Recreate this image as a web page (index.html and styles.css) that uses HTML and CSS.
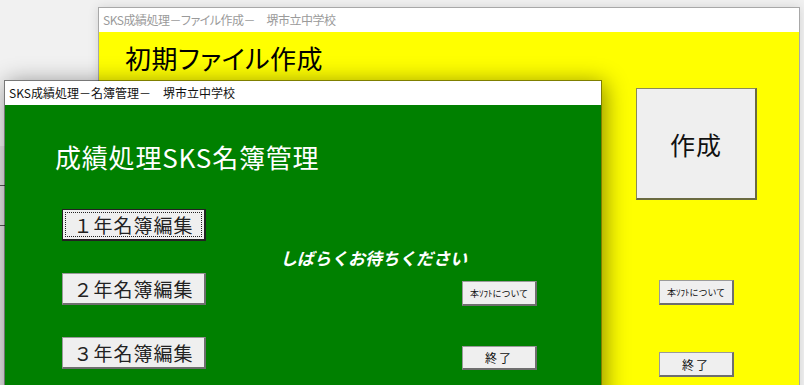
FILE: index.html
```html
<!DOCTYPE html>
<html lang="ja">
<head>
<meta charset="utf-8">
<link rel="stylesheet" href="styles.css">
</head>
<body>
<div class="desktop">
  <div class="bg-app">
    <div class="bg-row"></div>
    <div class="bg-row"></div>
  </div>

  <div class="win win-back">
    <div class="titlebar inactive">SKS成績処理－ファイル作成－　堺市立中学校</div>
    <div class="client yellow">
      <h1 class="heading dark">初期ファイル作成</h1>
      <div class="y-controls">
        <button class="btn big">作成</button>
        <button class="btn small about">本ｿﾌﾄについて</button>
        <button class="btn small exit-y">終了</button>
      </div>
    </div>
  </div>

  <div class="win win-front">
    <div class="titlebar">SKS成績処理－名簿管理－　堺市立中学校</div>
    <div class="client green">
      <h1 class="heading light">成績処理SKS名簿管理</h1>
      <div class="g-controls">
        <div class="grade-col">
          <button class="btn grade focused"><span class="focus-ring">１年名簿編集</span></button>
          <button class="btn grade"><span class="focus-ring none">２年名簿編集</span></button>
          <button class="btn grade"><span class="focus-ring none">３年名簿編集</span></button>
        </div>
        <div class="side-col">
          <p class="wait">しばらくお待ちください</p>
          <button class="btn small about">本ｿﾌﾄについて</button>
          <button class="btn small exit-g">終了</button>
        </div>
      </div>
    </div>
  </div>
</div>
</body>
</html>
```

FILE: styles.css
```css
* { box-sizing: border-box; }
html, body {
  margin: 0;
  padding: 0;
  width: 804px;
  height: 385px;
  overflow: hidden;
  background: #f0f0f0;
  font-family: "Noto Sans CJK JP", "Noto Sans", sans-serif;
}
.desktop {
  position: relative;
  width: 804px;
  height: 385px;
  overflow: hidden;
  background: #f1f1f1;
}

.bg-app {
  position: absolute;
  left: 0;
  top: 146px;
  width: 12px;
  height: 260px;
  background: #e4e4e4;
}
.bg-row {
  height: 40px;
  border-bottom: 1px solid #555;
}

.win {
  position: absolute;
  display: flex;
  flex-direction: column;
  border: 1px solid rgba(0, 0, 0, 0.5);
}
.win-back {
  left: 98px;
  top: 7px;
  width: 702px;
  height: 400px;
  border-color: #a8a8a8;
  box-shadow: 0 0 10px rgba(0, 0, 0, 0.12);
}
.win-front {
  left: 4px;
  top: 80px;
  width: 598px;
  height: 340px;
  box-shadow: 3px 3px 22px rgba(0, 0, 0, 0.45);
}

.titlebar {
  height: 24px;
  line-height: 23px;
  padding-left: 4px;
  background: #ffffff;
  font-size: 12px;
  color: #111;
  white-space: nowrap;
  flex: none;
}
.titlebar.inactive {
  color: #9a9a9a;
  font-feature-settings: "palt" 1;
  letter-spacing: -0.5px;
}

.client { flex: 1; }
.yellow {
  background: #ffff00;
  display: grid;
  grid-template-columns: 511px 121px;
  align-items: start;
  padding-left: 26px;
}
.green {
  background: #008000;
  padding-left: 50px;
}

.heading {
  margin: 0;
  font-size: 26px;
  font-weight: normal;
  line-height: 32px;
  white-space: nowrap;
}
.yellow .heading { margin-top: 10px; font-feature-settings: "palt" 1; letter-spacing: 0.5px; }
.green .heading { margin-top: 36px; letter-spacing: 0.8px; }
.dark { color: #000; }
.light { color: #ffffff; }

.btn {
  margin: 0;
  padding: 0;
  background: #efefef;
  border-style: solid;
  border-width: 1px 2px 2px 1px;
  border-color: #9a9a9a #6e6e6e #6e6e6e #9a9a9a;
  font-family: "Noto Sans CJK JP", "Noto Sans", sans-serif;
  color: #111;
  display: flex;
  align-items: center;
  justify-content: center;
  white-space: nowrap;
}

.y-controls {
  grid-column: 2;
  margin-top: 56px;
  display: flex;
  flex-direction: column;
  align-items: center;
}
.big {
  width: 121px;
  height: 112px;
  font-size: 25px;
  letter-spacing: 1px;
  border-color: #8a8a5a #6a6a40 #6a6a40 #8a8a5a;
}
.small {
  width: 75px;
  height: 25px;
  font-size: 9px;
  letter-spacing: 0;
}
.small.exit-y, .small.exit-g {
  font-size: 12px;
  letter-spacing: 2px;
}
.y-controls .about { margin-top: 80px; }
.y-controls .exit-y { margin-top: 47px; }

.g-controls {
  display: flex;
  margin-top: 36px;
}
.grade-col {
  margin-left: 7px;
  width: 144px;
  display: flex;
  flex-direction: column;
  gap: 32px;
}
.grade {
  width: 144px;
  height: 32px;
  font-size: 19px;
  color: #222;
  letter-spacing: 1px;
}
.focused {
  border: 1px solid #222;
  border-right-width: 2px;
  border-bottom-width: 2px;
}
.focus-ring {
  display: flex;
  align-items: center;
  justify-content: center;
  width: calc(100% - 4px);
  height: calc(100% - 4px);
  border: 1px dotted #222;
}
.focus-ring.none { border-color: transparent; }

.side-col {
  margin-left: 74px;
  width: 257px;
  display: flex;
  flex-direction: column;
  align-items: flex-start;
}
.wait {
  margin: 37px 0 0 0;
  font-size: 17px;
  line-height: 24px;
  font-weight: bold;
  font-style: italic;
  color: #ffffff;
  white-space: nowrap;
}
.side-col .about { margin-left: 182px; margin-top: 11px; }
.side-col .exit-g { margin-left: 182px; margin-top: 40px; height: 24px; }
```
